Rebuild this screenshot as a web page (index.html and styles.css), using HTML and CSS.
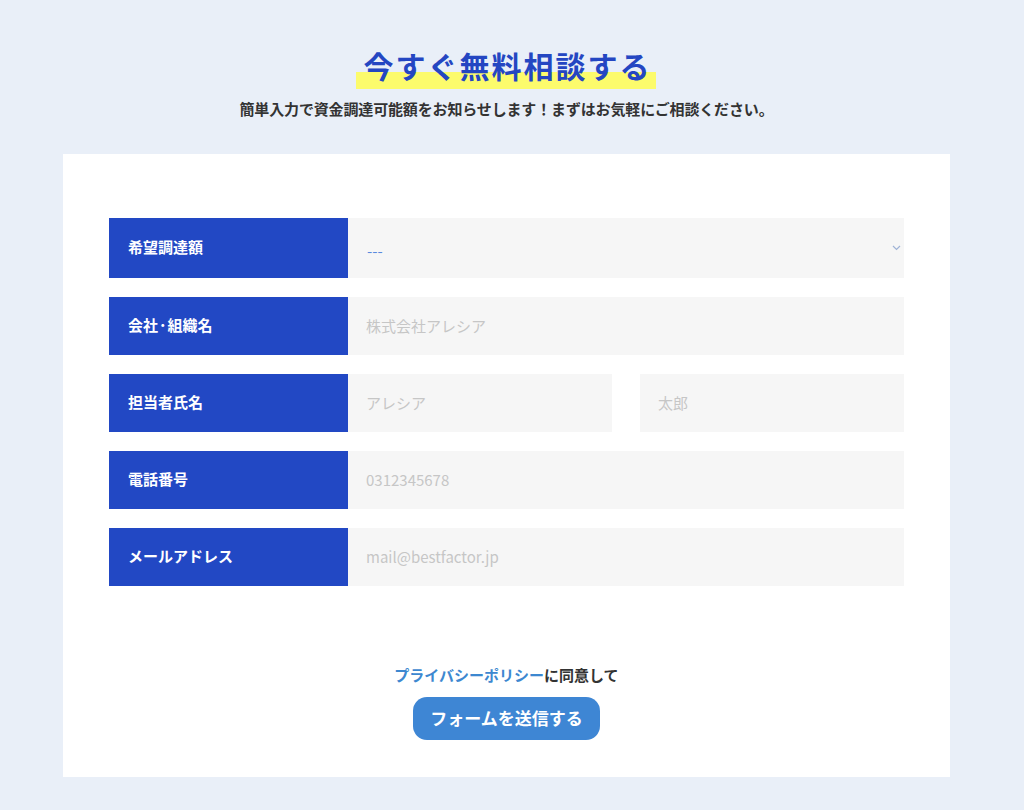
FILE: index.html
```html
<!DOCTYPE html>
<html lang="ja">
<head>
<meta charset="utf-8">
<title>今すぐ無料相談する</title>
<link rel="stylesheet" href="styles.css">
</head>
<body>
<section class="contact">
  <header class="contact-head">
    <h1 class="title"><span class="marker">今すぐ無料相談する</span></h1>
    <p class="lead">簡単入力で資金調達可能額をお知らせします！まずはお気軽にご相談ください。</p>
  </header>
  <form class="card">
    <div class="rows">
      <div class="row">
        <div class="label">希望調達額</div>
        <div class="field select-wrap" role="combobox" aria-expanded="false">
          <span class="select-value">---</span>
          <svg class="chev" width="9" height="6" viewBox="0 0 9 6"><path d="M1 1l3.5 3.5L8 1" fill="none" stroke="#9fb3d6" stroke-width="1.2"/></svg>
        </div>
      </div>
      <div class="row">
        <div class="label">会社<span class="dot">･</span>組織名</div>
        <div class="field"><input class="control" type="text" placeholder="株式会社アレシア"></div>
      </div>
      <div class="row">
        <div class="label">担当者氏名</div>
        <div class="field split">
          <input class="control" type="text" placeholder="アレシア">
          <input class="control" type="text" placeholder="太郎">
        </div>
      </div>
      <div class="row">
        <div class="label">電話番号</div>
        <div class="field"><input class="control" type="tel" placeholder="0312345678"></div>
      </div>
      <div class="row">
        <div class="label">メールアドレス</div>
        <div class="field"><input class="control" type="email" placeholder="mail@bestfactor.jp"></div>
      </div>
    </div>
    <div class="submit-area">
      <p class="agree"><a class="policy" href="#">プライバシーポリシー</a>に同意して</p>
      <button class="submit" type="button">フォームを送信する</button>
    </div>
  </form>
</section>
</body>
</html>
```

FILE: styles.css
```css
* { box-sizing: border-box; }
html, body { margin: 0; padding: 0; }
body {
  background: #e9eff8;
  font-family: "Noto Sans CJK JP", "Noto Sans", sans-serif;
  color: #333;
  width: 1024px;
  height: 810px;
  overflow: hidden;
}
.contact {
  padding-top: 50px;
  padding-right: 11px;
  display: flex;
  flex-direction: column;
  align-items: center;
}
.contact-head { text-align: center; }
.title {
  margin: 0;
  font-size: 30px;
  line-height: 30px;
  font-weight: 700;
  color: #2446c2;
  letter-spacing: 2px;
}
.marker {
  display: inline-block;
  position: relative;
  padding: 0 5px 0 7px;
}
.marker::before {
  content: "";
  position: absolute;
  left: 0;
  right: 0;
  top: 22px;
  height: 17px;
  background: #fcfb6c;
  z-index: -1;
}
.lead {
  margin: 18px 0 0;
  font-size: 15px;
  line-height: 22px;
  font-weight: 700;
  color: #333;
  letter-spacing: -0.15px;
}
.card {
  margin-top: 34px;
  width: 887px;
  background: #fff;
  padding: 64px 46px 37px;
}
.rows {
  display: flex;
  flex-direction: column;
  gap: 19px;
}
.row {
  display: flex;
  height: 58px;
}
.row:first-child { height: 60px; }
.label {
  width: 239px;
  flex: none;
  background: #2248c4;
  color: #fff;
  font-size: 15px;
  font-weight: 700;
  display: flex;
  align-items: center;
  padding-left: 19px;
  padding-bottom: 3px;
}
.dot { margin: 0 1px; }
.field {
  flex: 1;
  display: flex;
}
.split { gap: 28px; }
.control {
  flex: 1;
  min-width: 0;
  border: 0;
  outline: 0;
  background: #f6f6f6;
  font-family: "Noto Sans CJK JP", "Noto Sans", sans-serif;
  font-size: 15px;
  color: #333;
  padding: 0 18px 2px;
  margin: 0;
  height: 100%;
}
.control::placeholder { color: #c6c6c6; }
.select-wrap {
  position: relative;
  background: #f6f6f6;
  align-items: center;
  padding: 4px 19px 0;
}
.select-value {
  font-size: 15px;
  color: #5a8ade;
}
.chev {
  position: absolute;
  right: 3px;
  top: 27px;
  pointer-events: none;
}
.submit-area {
  margin-top: 78px;
  display: flex;
  flex-direction: column;
  align-items: center;
}
.agree {
  margin: 0;
  font-size: 15px;
  line-height: 22px;
  font-weight: 700;
  color: #333;
}
.policy {
  color: #3d88d0;
  text-decoration: none;
}
.submit {
  margin-top: 11px;
  width: 187px;
  height: 43px;
  border: 0;
  border-radius: 14px;
  background: #3e86d4;
  color: #fff;
  font-family: "Noto Sans CJK JP", "Noto Sans", sans-serif;
  font-size: 17px;
  font-weight: 700;
  padding: 0 0 2px;
}
```
